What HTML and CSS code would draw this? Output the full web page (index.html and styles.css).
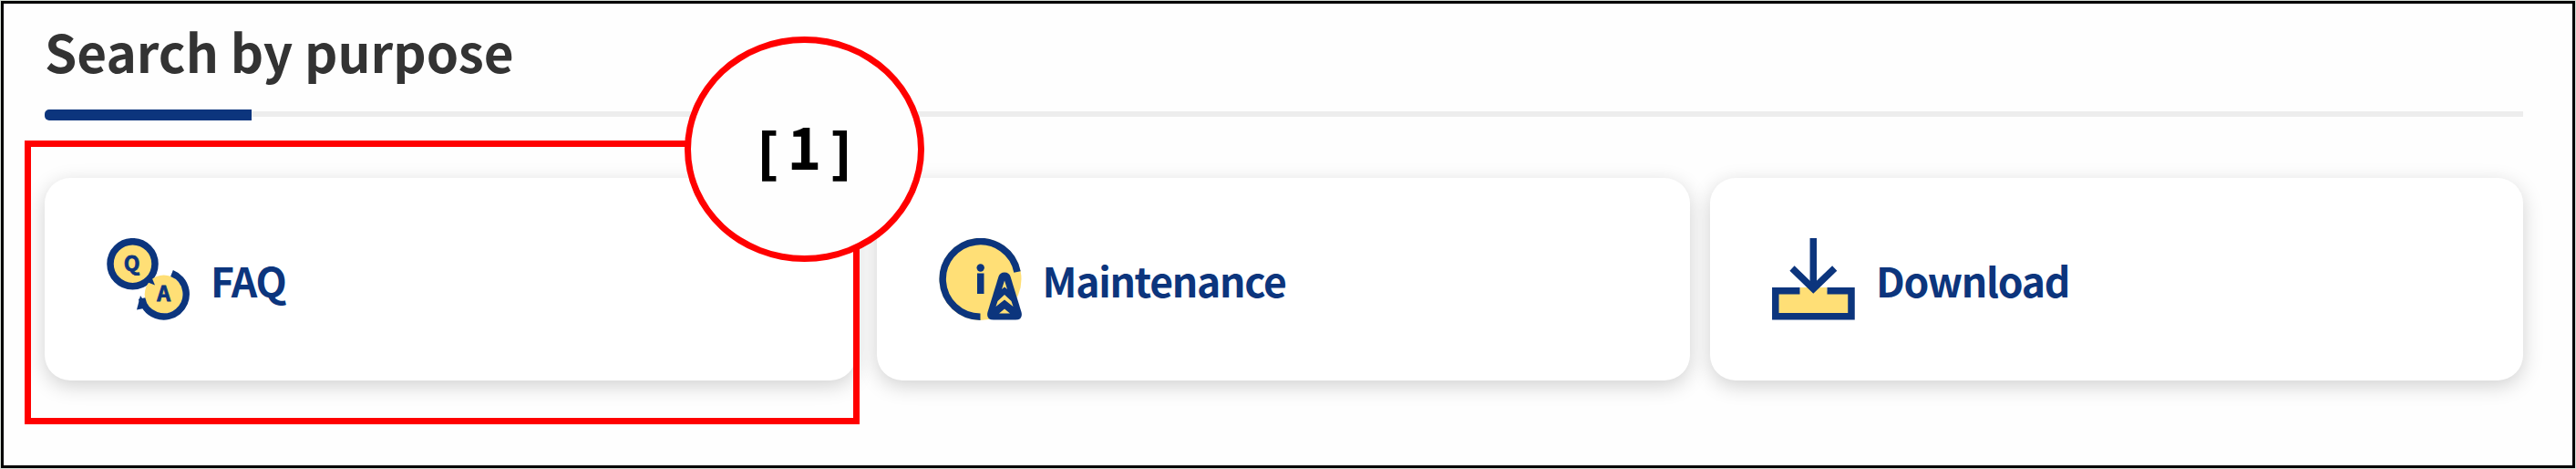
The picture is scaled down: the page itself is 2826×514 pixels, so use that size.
FILE: index.html
```html
<!DOCTYPE html>
<html lang="en">
  <head>
    <meta charset="UTF-8" />
    <meta name="viewport" content="width=device-width, initial-scale=1.0" />
    <title>Search by purpose</title>
    <link rel="stylesheet" href="styles.css">
  </head>
  <body>
    <main class="purpose">
      <h2 class="purpose-title">Search by purpose</h2>
      <div class="title-line"></div>

      <nav class="card-list">
        <a class="card">
          <svg class="card-icon" viewBox="0 0 91 90">
            <path class="fill-navy" d="M51 41L53 51.500L41 50z" />
            <circle class="fill-yellow line" cx="28.500" cy="28.200" r="24.500" />
            <path class="fill-navy" d="M37 63L33 78.500L46 76z" />
            <circle class="fill-yellow" cx="62.700" cy="61.500" r="21" />
            <path class="line" d="M71.500 38.600A24.500 24.500 0 1 1 38.600 66" />
            <path class="fill-navy" d="M49 42L53 51.500L44 48z" />
            <text class="icon-letter" x="27.700" y="36">Q</text>
            <text class="icon-letter" x="62.700" y="68.500">A</text>
          </svg>
          <span>FAQ</span>
        </a>
        <a class="card">
          <svg class="card-icon" viewBox="0 0 91 90">
            <circle class="fill-yellow" cx="45.500" cy="45" r="45" />
            <path class="line" d="M86 37A41.300 41.300 0 1 0 45.500 86.200" />
            <circle class="fill-navy" cx="45.700" cy="32.500" r="4.200" />
            <rect class="fill-navy" x="42" y="38.500" width="7.500" height="22.500" />
            <path class="fill-navy" d="M65.500 42Q67 37.500 72 37.500Q77 37.500 78.500 42L90.500 81Q92.500 89.500 84 89.500H60Q51.500 89.500 53.500 81z" />
            <path class="fill-yellow" d="M72 46.500L75 56L72 53.500L69 56z" />
            <path class="fill-yellow" d="M72 62L79.500 69L81.500 75L72 67.500L62.500 75L64.500 69z" />
            <path class="fill-yellow" d="M72 77.500L78 82.500H66z" />
          </svg>
          <span>Maintenance</span>
        </a>
        <a class="card">
          <svg class="card-icon" viewBox="0 0 91 90">
            <path class="fill-yellow" d="M4 58H30.500V54H60.500V58H87V86H4z" />
            <path class="line" d="M30.500 57.800H3.800V85.700H87V57.800H60.500" />
            <path class="line" d="M45.300 0V54" />
            <path class="line" d="M22 33L45.300 55.500L68.700 33" />
          </svg>
          <span>Download</span>
        </a>
      </nav>

      <div class="marker-box"></div>
      <div class="marker-label"><span class="bracket">[</span><span class="number">1</span><span class="bracket">]</span></div>
    </main>
  </body>
</html>
```
FILE: styles.css
```css
* {
  margin: 0;
  padding: 0;
  box-sizing: border-box;
}

body {
  background: #d5dcd6;
  padding: 1px;
  font-family: "Noto Sans CJK JP", "Noto Sans", sans-serif;
}

.purpose {
  position: relative;
  height: 512px;
  padding: 18px 54px 0 45px;
  border: 3px solid #000;
  background: #fefefe;
}

.purpose-title {
  height: 98px;
  color: #333;
  font-size: 56.6px;
  font-weight: 700;
  line-height: 66px;
  white-space: nowrap;
}

.title-line {
  height: 12px;
  background: linear-gradient(#ededed, #ededed) 0 2px / 100% 6px no-repeat;
}

.title-line::before {
  content: "";
  display: block;
  width: 227px;
  height: 12px;
  border-radius: 5px 0 0 5px;
  background: #0c357d;
}

.card-list {
  display: grid;
  grid-template-columns: 890px 1fr 1fr;
  gap: 22.5px;
  margin-top: 63px;
}

.card {
  display: flex;
  align-items: center;
  gap: 23px;
  height: 222px;
  padding: 0 68px;
  border-radius: 28px;
  background: #fff;
  box-shadow: 0 6px 22px rgba(0, 0, 0, 0.18);
  color: #0c357d;
  font-size: 44.5px;
  font-weight: 700;
  letter-spacing: -1.3px;
}

.card-icon {
  width: 91px;
  height: 90px;
}

.fill-navy {
  fill: #0c357d;
}

.fill-yellow {
  fill: #ffdf76;
}

.line {
  stroke: #0c357d;
  stroke-width: 7.5;
}

.line:not(.fill-yellow) {
  fill: none;
}

.icon-letter {
  fill: #0c357d;
  stroke: #0c357d;
  stroke-width: 0.8;
  font-size: 23px;
  letter-spacing: 0;
  text-anchor: middle;
}

.marker-box {
  position: absolute;
  left: 23px;
  top: 150px;
  width: 916px;
  height: 311px;
  border: 7px solid #f00;
}

.marker-label {
  position: absolute;
  left: 747px;
  top: 36px;
  display: flex;
  align-items: center;
  justify-content: center;
  gap: 3px;
  width: 263px;
  height: 247px;
  border: 7px solid #f00;
  border-radius: 50%;
  background: #fefefe;
  color: #000;
  font-size: 64px;
  font-weight: 700;
  line-height: 1;
}

.number {
  padding-bottom: 11px;
}

.bracket {
  padding-top: 10px;
  font-family: "DejaVu Sans Mono", monospace;
  font-size: 62px;
}
```
